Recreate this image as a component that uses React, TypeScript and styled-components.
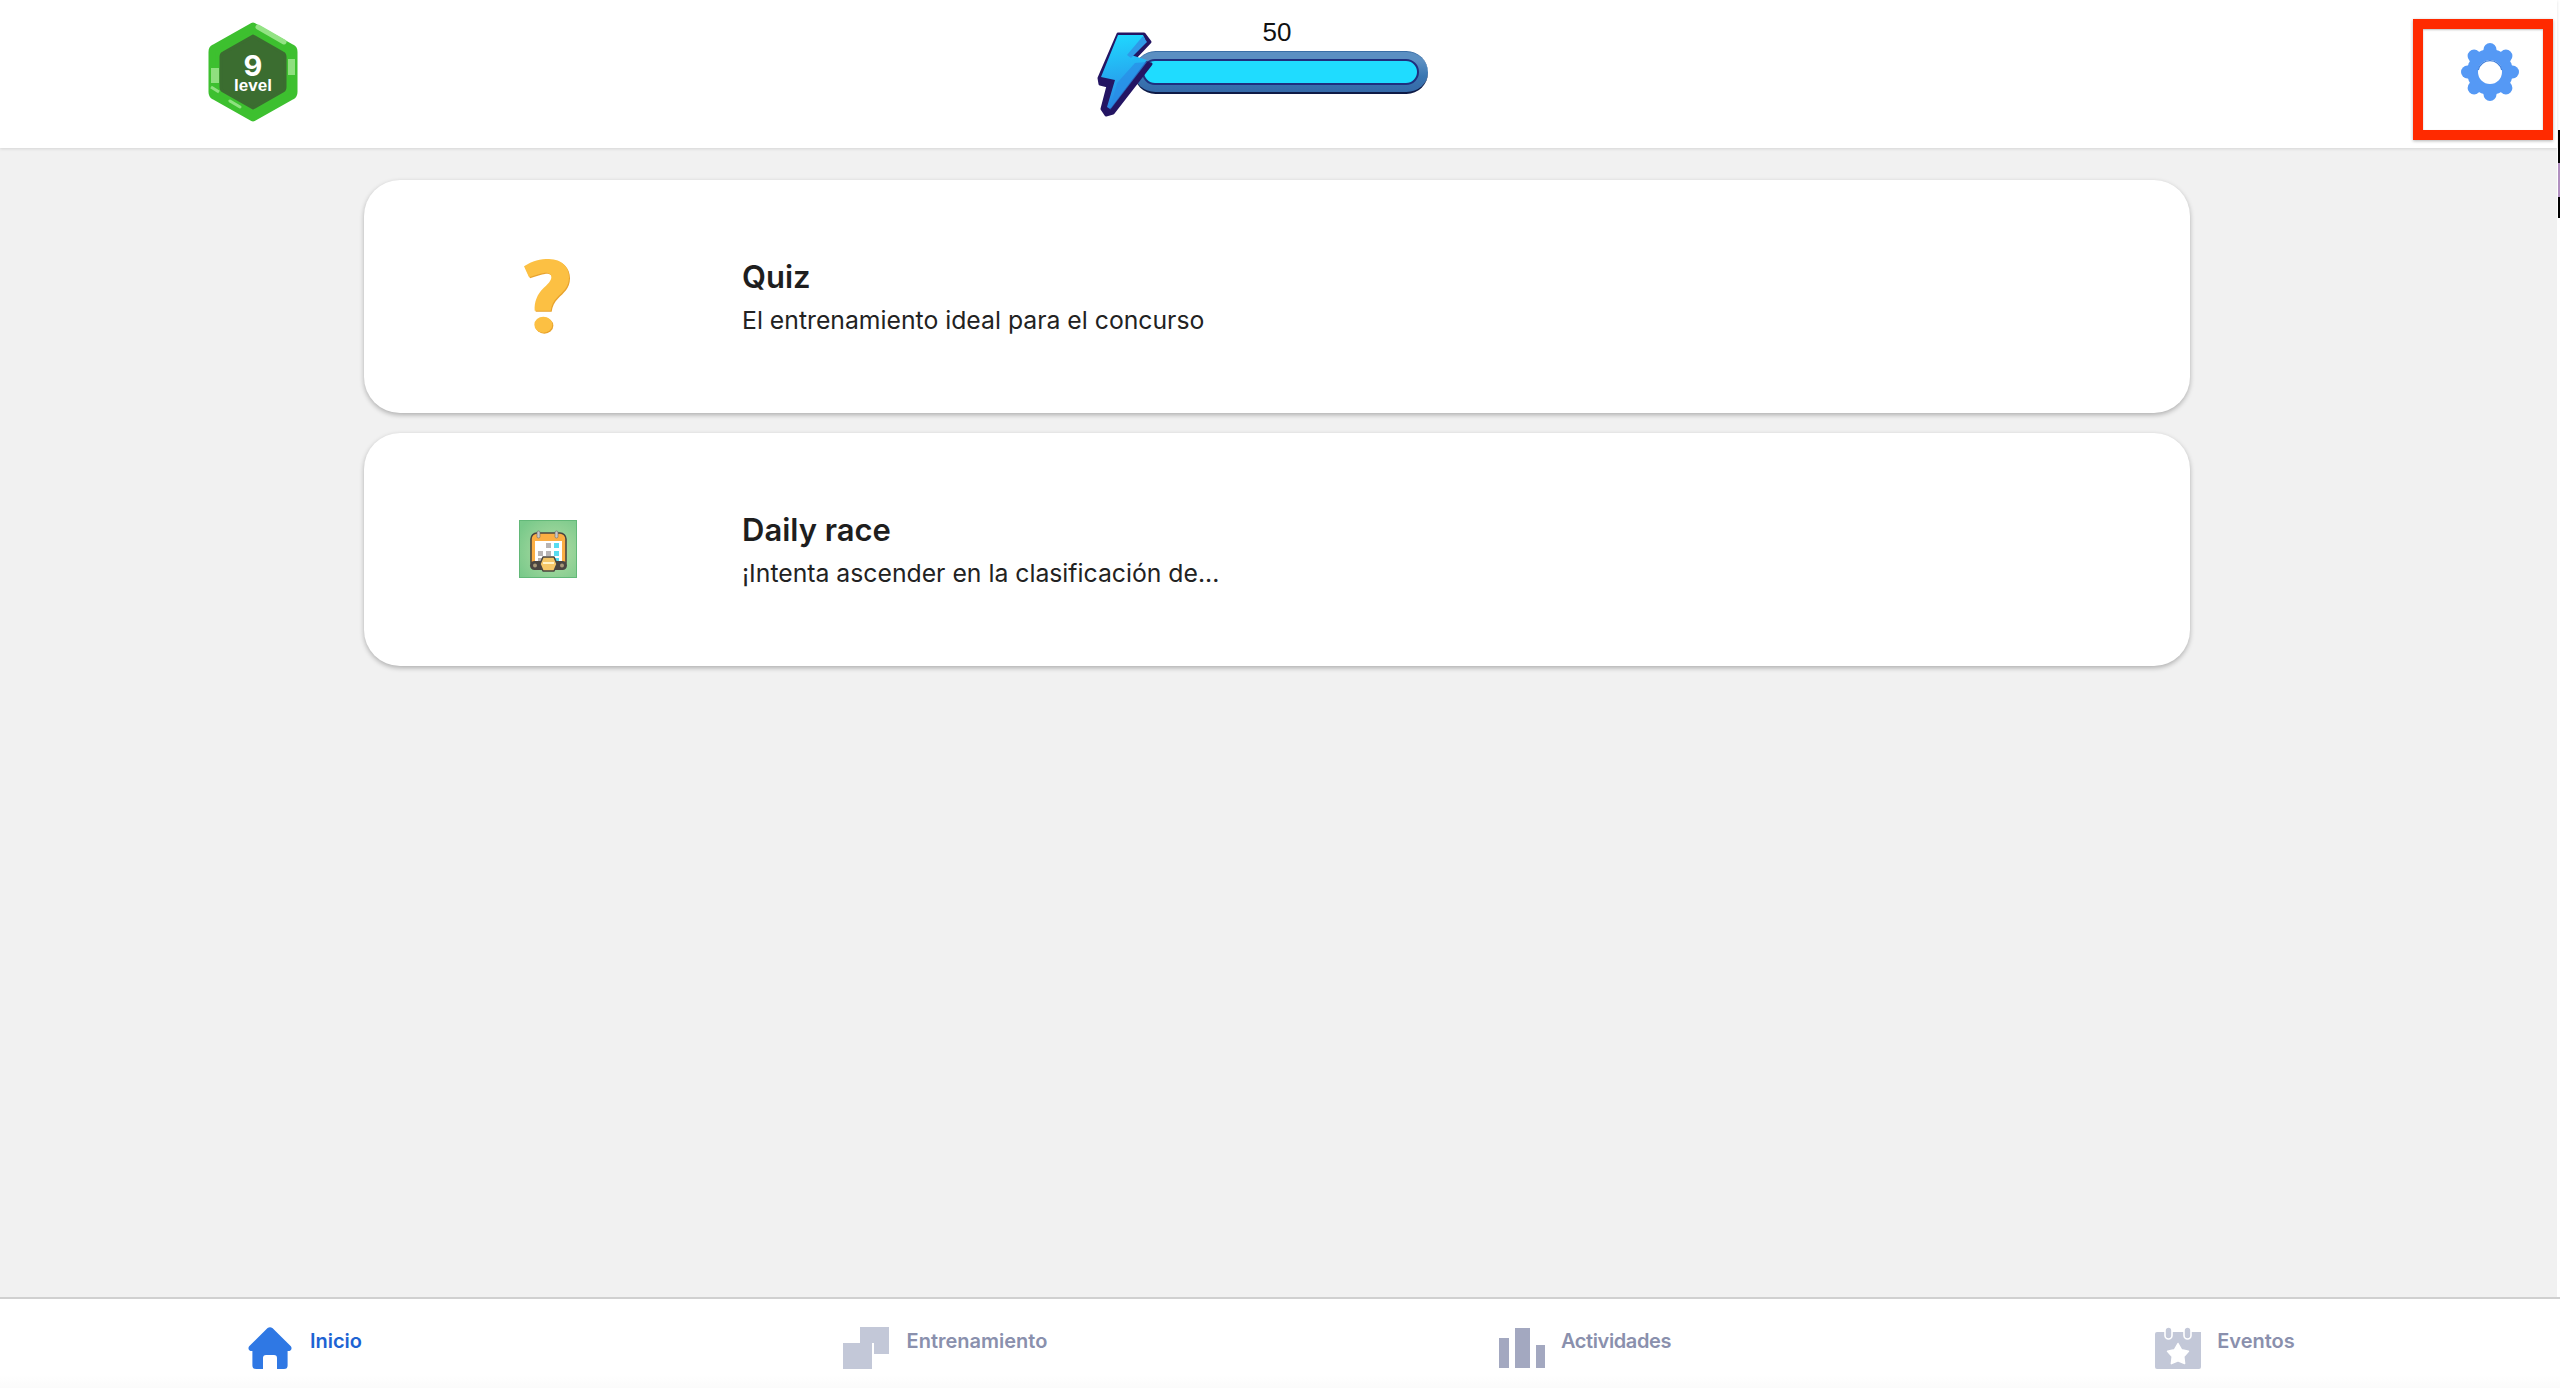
import React from "react";
import styled, { createGlobalStyle } from "styled-components";

const Global = createGlobalStyle`
  html, body { margin: 0; padding: 0; height: 100%; overflow: hidden; background: #fff; }
  #root { height: 100%; }
  * { box-sizing: border-box; }
`;

const Shell = styled.div`
  position: relative;
  height: 1388px;
  padding-right: 3px;
  display: flex;
  flex-direction: column;
  background: #fff;
  font-family: Inter, "Liberation Sans", sans-serif;
`;

const Header = styled.header`
  flex: 0 0 148px;
  display: grid;
  grid-template-columns: 890px 331px 1fr;
  align-items: center;
  padding: 0 38px 4px 207px;
  background: #fff;
  box-shadow: 0 1px 3px rgba(0, 0, 0, 0.12);
  z-index: 1;
`;

const BadgeWrap = styled.div`
  width: 92px;
  height: 104px;
  position: relative;
  display: flex;
  flex-direction: column;
  align-items: center;
  justify-content: center;
  color: #fff;
  font-weight: 700;
`;

const BadgeArt = styled.svg`
  position: absolute;
  inset: 0;
`;

const BadgeNum = styled.span`
  position: relative;
  font-size: 29px;
  line-height: 24px;
  margin-top: 2px;
`;

const BadgeLabel = styled.span`
  position: relative;
  font-size: 17px;
  line-height: 15px;
  font-family: "Liberation Sans", sans-serif;
`;

const Energy = styled.div`
  position: relative;
  align-self: start;
  margin-top: 18px;
  padding-left: 37px;
  display: flex;
  flex-direction: column;
  align-items: stretch;
`;

const EnergyValue = styled.div`
  font-family: "Liberation Sans", sans-serif;
  font-size: 26px;
  line-height: 28px;
  color: #111;
  text-align: center;
  padding-right: 8px;
  margin-bottom: 5px;
`;

const Track = styled.div`
  height: 43px;
  border-radius: 22px;
  padding: 7px 9px 7px 8px;
  background: linear-gradient(#5b8fc2 0 22%, #3a77b2 60%, #3569a8 100%);
  border-bottom: 2px solid #0e1a46;
  border-top: 1px solid #3a6ea6;
`;

const Fill = styled.div`
  height: 100%;
  border-radius: 14px;
  background: #1fdcff;
  border: 2px solid #1f2f7e;
`;

const Bolt = styled.svg`
  position: absolute;
  left: 0;
  top: 13px;
`;

const GearSlot = styled.div`
  justify-self: end;
  display: flex;
`;

const Highlight = styled.div`
  position: absolute;
  left: 2413px;
  top: 19px;
  width: 140px;
  height: 121px;
  border: 10px solid #ff2a00;
  box-shadow: 0 1px 3px rgba(0, 0, 0, 0.3), inset 0 1px 2px rgba(0, 0, 0, 0.25);
  z-index: 2;
`;

const Edge = styled.div`
  position: absolute;
  right: 0;
  top: 130px;
  width: 2px;
  height: 88px;
  background: linear-gradient(#000 0 33px, #b190c0 33px 67px, #000 67px);
  z-index: 2;
`;

const Main = styled.main`
  flex: 1;
  background: #f1f1f1;
  padding: 32px 367px 0 364px;
  display: flex;
  flex-direction: column;
  gap: 20px;
`;

const Card = styled.section`
  height: 233px;
  border-radius: 36px;
  background: #fff;
  box-shadow: 0 2px 5px rgba(0, 0, 0, 0.28);
  display: flex;
  align-items: center;
`;

const CardIcon = styled.div`
  flex: 0 0 366px;
  display: flex;
  justify-content: center;
  align-items: center;
  margin-right: 12px;
`;

const CardText = styled.div`
  display: flex;
  flex-direction: column;
`;

const CardTitle = styled.h2`
  margin: 0;
  font-size: 31px;
  line-height: 40px;
  font-weight: 600;
  color: #1e1e1e;
`;

const CardDesc = styled.p`
  margin: 7px 0 0;
  font-size: 24.75px;
  line-height: 32px;
  font-weight: 400;
  color: #222;
`;

const Footer = styled.nav`
  flex: 0 0 91px;
  margin-right: -3px;
  display: grid;
  grid-template-columns: repeat(4, 1fr);
  align-items: start;
  border-top: 2px solid #d0d0d0;
  background: linear-gradient(#fff 85%, #fbfbfb);
`;

const NavItem = styled.div<{ $gap?: number }>`
  display: flex;
  align-items: center;
  justify-content: center;
  gap: ${(p) => p.$gap ?? 18}px;
  height: 44px;
  margin-top: 27px;
  padding-right: 30px;
`;

const NavLabel = styled.span<{ $active?: boolean; $tight?: boolean }>`
  font-size: 20px;
  font-weight: 600;
  letter-spacing: ${(p) => (p.$tight ? "-0.4px" : "0")};
  color: ${(p) => (p.$active ? "#1d63d3" : "#8a90ad")};
  position: relative;
  top: -7px;
`;

const CalendarArt = styled.svg`
  margin: 0 0 2px 1px;
`;

const GearIcon = () => {
  const teeth = [0, 45, 90, 135, 180, 225, 270, 315];
  return (
    <svg width="58" height="58" viewBox="-29 -29 58 58" aria-hidden>
      <g stroke="#5599f5" strokeWidth="13" strokeLinecap="round">
        {teeth.map((a) => (
          <line key={a} x1="0" y1="0" x2="0" y2="-22.5" transform={`rotate(${a})`} />
        ))}
      </g>
      <circle r="23" fill="#5599f5" />
      <circle r="12" fill="#fff" />
      <path d="M-11.7 -2 A12 12 0 0 1 11.7 -2" fill="none" stroke="#3f7fdc" strokeWidth="1.2" />
    </svg>
  );
};

const HexBadge = () => (
  <BadgeArt width="92" height="104" viewBox="-1 -1 92 104" aria-hidden>
    <path d="M45 5 L84 27 Q86 28 86 31 V71 Q86 74 84 75 L45 97 L6 75 Q4 74 4 71 V31 Q4 28 6 27 Z" fill="#3dc02f" stroke="#3dc02f" strokeWidth="7" strokeLinejoin="round" />
    <path d="M45 15 L75 32 Q77 33 77 36 V66 Q77 69 75 70 L45 87 L15 70 Q13 69 13 66 V36 Q13 33 15 32 Z" fill="#3b6d30" stroke="#3b6d30" strokeWidth="3" strokeLinejoin="round" />
    <path d="M50 6 L76 21" stroke="#93e384" strokeWidth="5" strokeLinecap="round" />
    <path d="M3 47 H11 V62 H3 Z" fill="#8fe07f" />
    <path d="M80 38 H87 V54 H80 Z" fill="#8fe07f" />
    <path d="M3 66 L11 71" stroke="#8fe07f" strokeWidth="3" />
    <path d="M22 80 L32 86" stroke="#8fe07f" strokeWidth="3" strokeLinecap="round" />
  </BadgeArt>
);

const BoltIcon = () => (
  <Bolt width="60" height="90" viewBox="0 0 60 90" aria-hidden>
    <defs>
      <linearGradient id="boltFill" x1="0.3" y1="0" x2="0.4" y2="1">
        <stop offset="0" stopColor="#1fd8ff" />
        <stop offset="1" stopColor="#2b86e4" />
      </linearGradient>
    </defs>
    <path d="M21 3 L47 3 L53 11 L36 29 L54 33 L16 82 L9 84 L5 78 L11 55 L3 53 L2 47 Z" fill="#241563" stroke="#241563" strokeWidth="3" strokeLinejoin="round" />
    <path d="M21 4 L46 4 L48 8 L34 24 L50 29 L13 78 L10 76 L18 49 L4 46 Z" fill="url(#boltFill)" />
    <path d="M46 5 L50 11 L34 27 L30 24 Z" fill="#2f9ae8" />
    <path d="M50 31 L13 79 L20 52 L38 32 Z" fill="#2a8ce6" opacity="0.7" />
  </Bolt>
);

const QuestionIcon = () => (
  <svg width="46" height="75" viewBox="0 0 138 225" aria-hidden>
    <g fill="#e8a32e" transform="translate(3 3)">
      <path d="M0 22 C25 5 50 0 75 0 C115 0 135 25 135 55 C135 85 115 100 100 115 C88 127 82 140 80 155 L32 155 C30 130 40 105 58 88 C72 75 82 65 82 55 C82 45 72 40 60 42 C50 43 35 48 15 55 Z" />
      <ellipse cx="58" cy="197" rx="27" ry="24" />
    </g>
    <g fill="#fcc043">
      <path d="M0 22 C25 5 50 0 75 0 C115 0 135 25 135 55 C135 85 115 100 100 115 C88 127 82 140 80 155 L32 155 C30 130 40 105 58 88 C72 75 82 65 82 55 C82 45 72 40 60 42 C50 43 35 48 15 55 Z" />
      <ellipse cx="58" cy="197" rx="27" ry="24" />
    </g>
  </svg>
);

const CalendarIcon = () => (
  <CalendarArt width="58" height="58" viewBox="0 0 58 58" aria-hidden>
    <defs>
      <radialGradient id="calBg" cx="0.6" cy="0.55" r="0.7">
        <stop offset="0" stopColor="#b4dda6" />
        <stop offset="1" stopColor="#79c98a" />
      </radialGradient>
    </defs>
    <rect width="58" height="58" fill="url(#calBg)" />
    <rect x="0.5" y="0.5" width="57" height="57" fill="none" stroke="#62b878" strokeWidth="1" />
    <rect x="12" y="13" width="35" height="35" rx="6" fill="#fbae43" stroke="#4a4540" strokeWidth="1.6" />
    <rect x="16" y="21" width="27" height="24" fill="#fff" />
    <rect x="18" y="11" width="3" height="7" rx="1.5" fill="#c9c9c9" stroke="#6a6a6a" strokeWidth="0.6" />
    <rect x="36" y="11" width="3" height="7" rx="1.5" fill="#c9c9c9" stroke="#6a6a6a" strokeWidth="0.6" />
    <rect x="27" y="23" width="5" height="5" fill="#b8b4b4" />
    <rect x="35" y="23" width="5" height="5" fill="#58dcf0" />
    <rect x="19" y="31" width="5" height="5" fill="#b8b4b4" />
    <rect x="27" y="31" width="5" height="5" fill="#b8b4b4" />
    <rect x="35" y="31" width="5" height="5" fill="#58dcf0" />
    <rect x="19" y="38" width="5" height="4" fill="#b8b4b4" />
    <rect x="35" y="38" width="5" height="4" fill="#58dcf0" />
    <rect x="11" y="41" width="37" height="9" rx="4.5" fill="#4a4540" />
    <circle cx="16" cy="45.5" r="2" fill="#a89878" />
    <circle cx="43" cy="45.5" r="2" fill="#a89878" />
    <path d="M24 37 H35 L38 44 L35 51 H24 L21 44 Z" fill="#f5c768" stroke="#4a4540" strokeWidth="1.5" strokeLinejoin="round" />
    <path d="M24 43 H35" stroke="#fff3c8" strokeWidth="2" />
  </CalendarArt>
);

const HomeIcon = () => (
  <svg width="44" height="42" viewBox="0 0 44 42" aria-hidden>
    <path
      fill="#2f78e4"
      d="M19.6 1 Q22 -0.6 24.4 1 L42.6 19 Q44.6 21.4 42.4 23.4 Q41.4 24.2 39.6 24 V38.5 Q39.6 42 36 42 H29 V31 Q29 28 26 28 H18 Q15 28 15 31 V42 H8 Q4.4 42 4.4 38.5 V24 Q2.6 24.2 1.6 23.4 Q-0.6 21.4 1.4 19 Z"
    />
  </svg>
);

const TrainingIcon = () => (
  <svg width="46" height="42" viewBox="0 0 46 42" aria-hidden>
    <rect x="17" y="0" width="29" height="27" fill="#c3c8d8" />
    <rect x="0" y="16" width="31" height="26" fill="#fff" />
    <rect x="0" y="16" width="29" height="26" fill="#c3c8d8" />
  </svg>
);

const StatsIcon = () => (
  <svg width="46" height="42" viewBox="0 0 46 42" aria-hidden>
    <rect x="0" y="11" width="10" height="30" fill="#a3a8c0" />
    <rect x="16" y="1" width="15" height="40" fill="#a3a8c0" />
    <rect x="37" y="18" width="9" height="23" fill="#a3a8c0" />
  </svg>
);

const EventsIcon = () => (
  <svg width="46" height="42" viewBox="0 0 46 42" aria-hidden>
    <path d="M2 5 H46 V40 Q46 42 44 42 H2 Q0 42 0 40 V7 Q0 5 2 5 Z" fill="#c3c8d8" />
    <rect x="10" y="0" width="7" height="12" rx="3.5" fill="#c3c8d8" stroke="#fff" strokeWidth="1.6" />
    <rect x="29" y="0" width="7" height="12" rx="3.5" fill="#c3c8d8" stroke="#fff" strokeWidth="1.6" />
    <path
      d="M23 16.5 L26.6 22.8 L33.5 24.2 L28.8 29.5 L29.6 36.6 L23 33.7 L16.4 36.6 L17.2 29.5 L12.5 24.2 L19.4 22.8 Z"
      fill="#fff"
      stroke="#fff"
      strokeWidth="1.5"
      strokeLinejoin="round"
    />
  </svg>
);

export default function App() {
  return (
    <Shell>
      <Global />
      <Header>
        <BadgeWrap>
          <HexBadge />
          <BadgeNum>9</BadgeNum>
          <BadgeLabel>level</BadgeLabel>
        </BadgeWrap>
        <Energy>
          <EnergyValue>50</EnergyValue>
          <Track>
            <Fill />
          </Track>
          <BoltIcon />
        </Energy>
        <GearSlot>
          <GearIcon />
        </GearSlot>
      </Header>
      <Main>
        <Card>
          <CardIcon>
            <QuestionIcon />
          </CardIcon>
          <CardText>
            <CardTitle>Quiz</CardTitle>
            <CardDesc>El entrenamiento ideal para el concurso</CardDesc>
          </CardText>
        </Card>
        <Card>
          <CardIcon>
            <CalendarIcon />
          </CardIcon>
          <CardText>
            <CardTitle>Daily race</CardTitle>
            <CardDesc>¡Intenta ascender en la clasificación de...</CardDesc>
          </CardText>
        </Card>
      </Main>
      <Footer>
        <NavItem>
          <HomeIcon />
          <NavLabel $active>Inicio</NavLabel>
        </NavItem>
        <NavItem>
          <TrainingIcon />
          <NavLabel>Entrenamiento</NavLabel>
        </NavItem>
        <NavItem $gap={16}>
          <StatsIcon />
          <NavLabel $tight>Actividades</NavLabel>
        </NavItem>
        <NavItem $gap={16}>
          <EventsIcon />
          <NavLabel>Eventos</NavLabel>
        </NavItem>
      </Footer>
      <Highlight />
      <Edge />
    </Shell>
  );
}
